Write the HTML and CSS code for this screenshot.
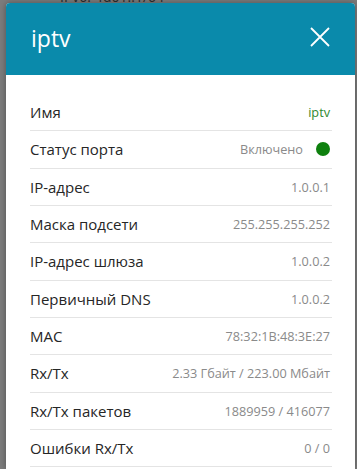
FILE: index.html
```html
<!DOCTYPE html>
<html lang="ru">
<head>
  <meta charset="UTF-8">
  <meta name="viewport" content="width=device-width, initial-scale=1">
  <title>iptv</title>
  <link rel="stylesheet" href="styles.css">
</head>
<body>

<div class="backdrop">
  <div class="page-line">IPv6:&nbsp;&nbsp;fd01::1/64</div>
</div>

<div class="modal">
  <div class="modal-head">
    <h2>iptv</h2>
    <button class="close" title="Закрыть">
      <svg width="20" height="20" viewBox="0 0 20 20">
        <path d="M1 1 L19 19 M19 1 L1 19" stroke="#fff" stroke-width="1.8" fill="none"/>
      </svg>
    </button>
  </div>
  <div class="modal-body">
    <div class="row"><span class="label">Имя</span><span class="value name">iptv</span></div>
    <div class="row"><span class="label">Статус порта</span><span class="value">Включено <i class="dot"></i></span></div>
    <div class="row"><span class="label">IP-адрес</span><span class="value">1.0.0.1</span></div>
    <div class="row"><span class="label">Маска подсети</span><span class="value">255.255.255.252</span></div>
    <div class="row"><span class="label">IP-адрес шлюза</span><span class="value">1.0.0.2</span></div>
    <div class="row"><span class="label">Первичный DNS</span><span class="value">1.0.0.2</span></div>
    <div class="row"><span class="label">MAC</span><span class="value">78:32:1B:48:3E:27</span></div>
    <div class="row"><span class="label">Rx/Tx</span><span class="value">2.33 Гбайт / 223.00 Мбайт</span></div>
    <div class="row"><span class="label">Rx/Tx пакетов</span><span class="value">1889959 / 416077</span></div>
    <div class="row"><span class="label">Ошибки Rx/Tx</span><span class="value">0 / 0</span></div>
  </div>
</div>

</body>
</html>
```

FILE: styles.css
```css
html, body {
  margin: 0;
  height: 100%;
  overflow: hidden;
}
body {
  font-family: "Open Sans", Arial, sans-serif;
  background: #7c7c7c;
  color: #333;
  position: relative;
}
.backdrop {
  height: 100%;
}
.page-line {
  position: absolute;
  top: -10px;
  left: 60px;
  font-size: 14px;
  line-height: 14px;
  color: #2a2a2a;
}
.modal {
  position: absolute;
  top: 3px;
  left: 6px;
  width: 349px;
  bottom: 0;
  background: #fff;
  border-radius: 4px 4px 0 0;
  box-shadow: 0 0 6px rgba(0,0,0,0.35);
  overflow: hidden;
}
.modal-head {
  background: #0a8aab;
  height: 72px;
  display: flex;
  align-items: center;
  justify-content: space-between;
  padding: 0 25px 0 25px;
}
.modal-head h2 {
  margin: 0;
  font-weight: normal;
  font-size: 23px;
  color: #fff;
  padding-bottom: 2px;
}
.close {
  background: none;
  border: none;
  padding: 0;
  width: 20px;
  height: 20px;
  cursor: pointer;
  margin-top: -4px;
}
.modal-body {
  padding: 19px 23px 0 24px;
}
.row {
  display: flex;
  justify-content: space-between;
  align-items: center;
  height: 36.33px;
  border-bottom: 1px solid #e4e4e4;
  padding-right: 2px;
}
.label {
  font-size: 15px;
  color: #262626;
}
.value {
  font-size: 12.7px;
  color: #8a8a8a;
  display: flex;
  align-items: center;
}
.value.name {
  color: #2f8a2f;
}
.dot {
  display: inline-block;
  width: 14px;
  height: 14px;
  border-radius: 50%;
  background: #0e800e;
  margin-left: 13px;
}
```
